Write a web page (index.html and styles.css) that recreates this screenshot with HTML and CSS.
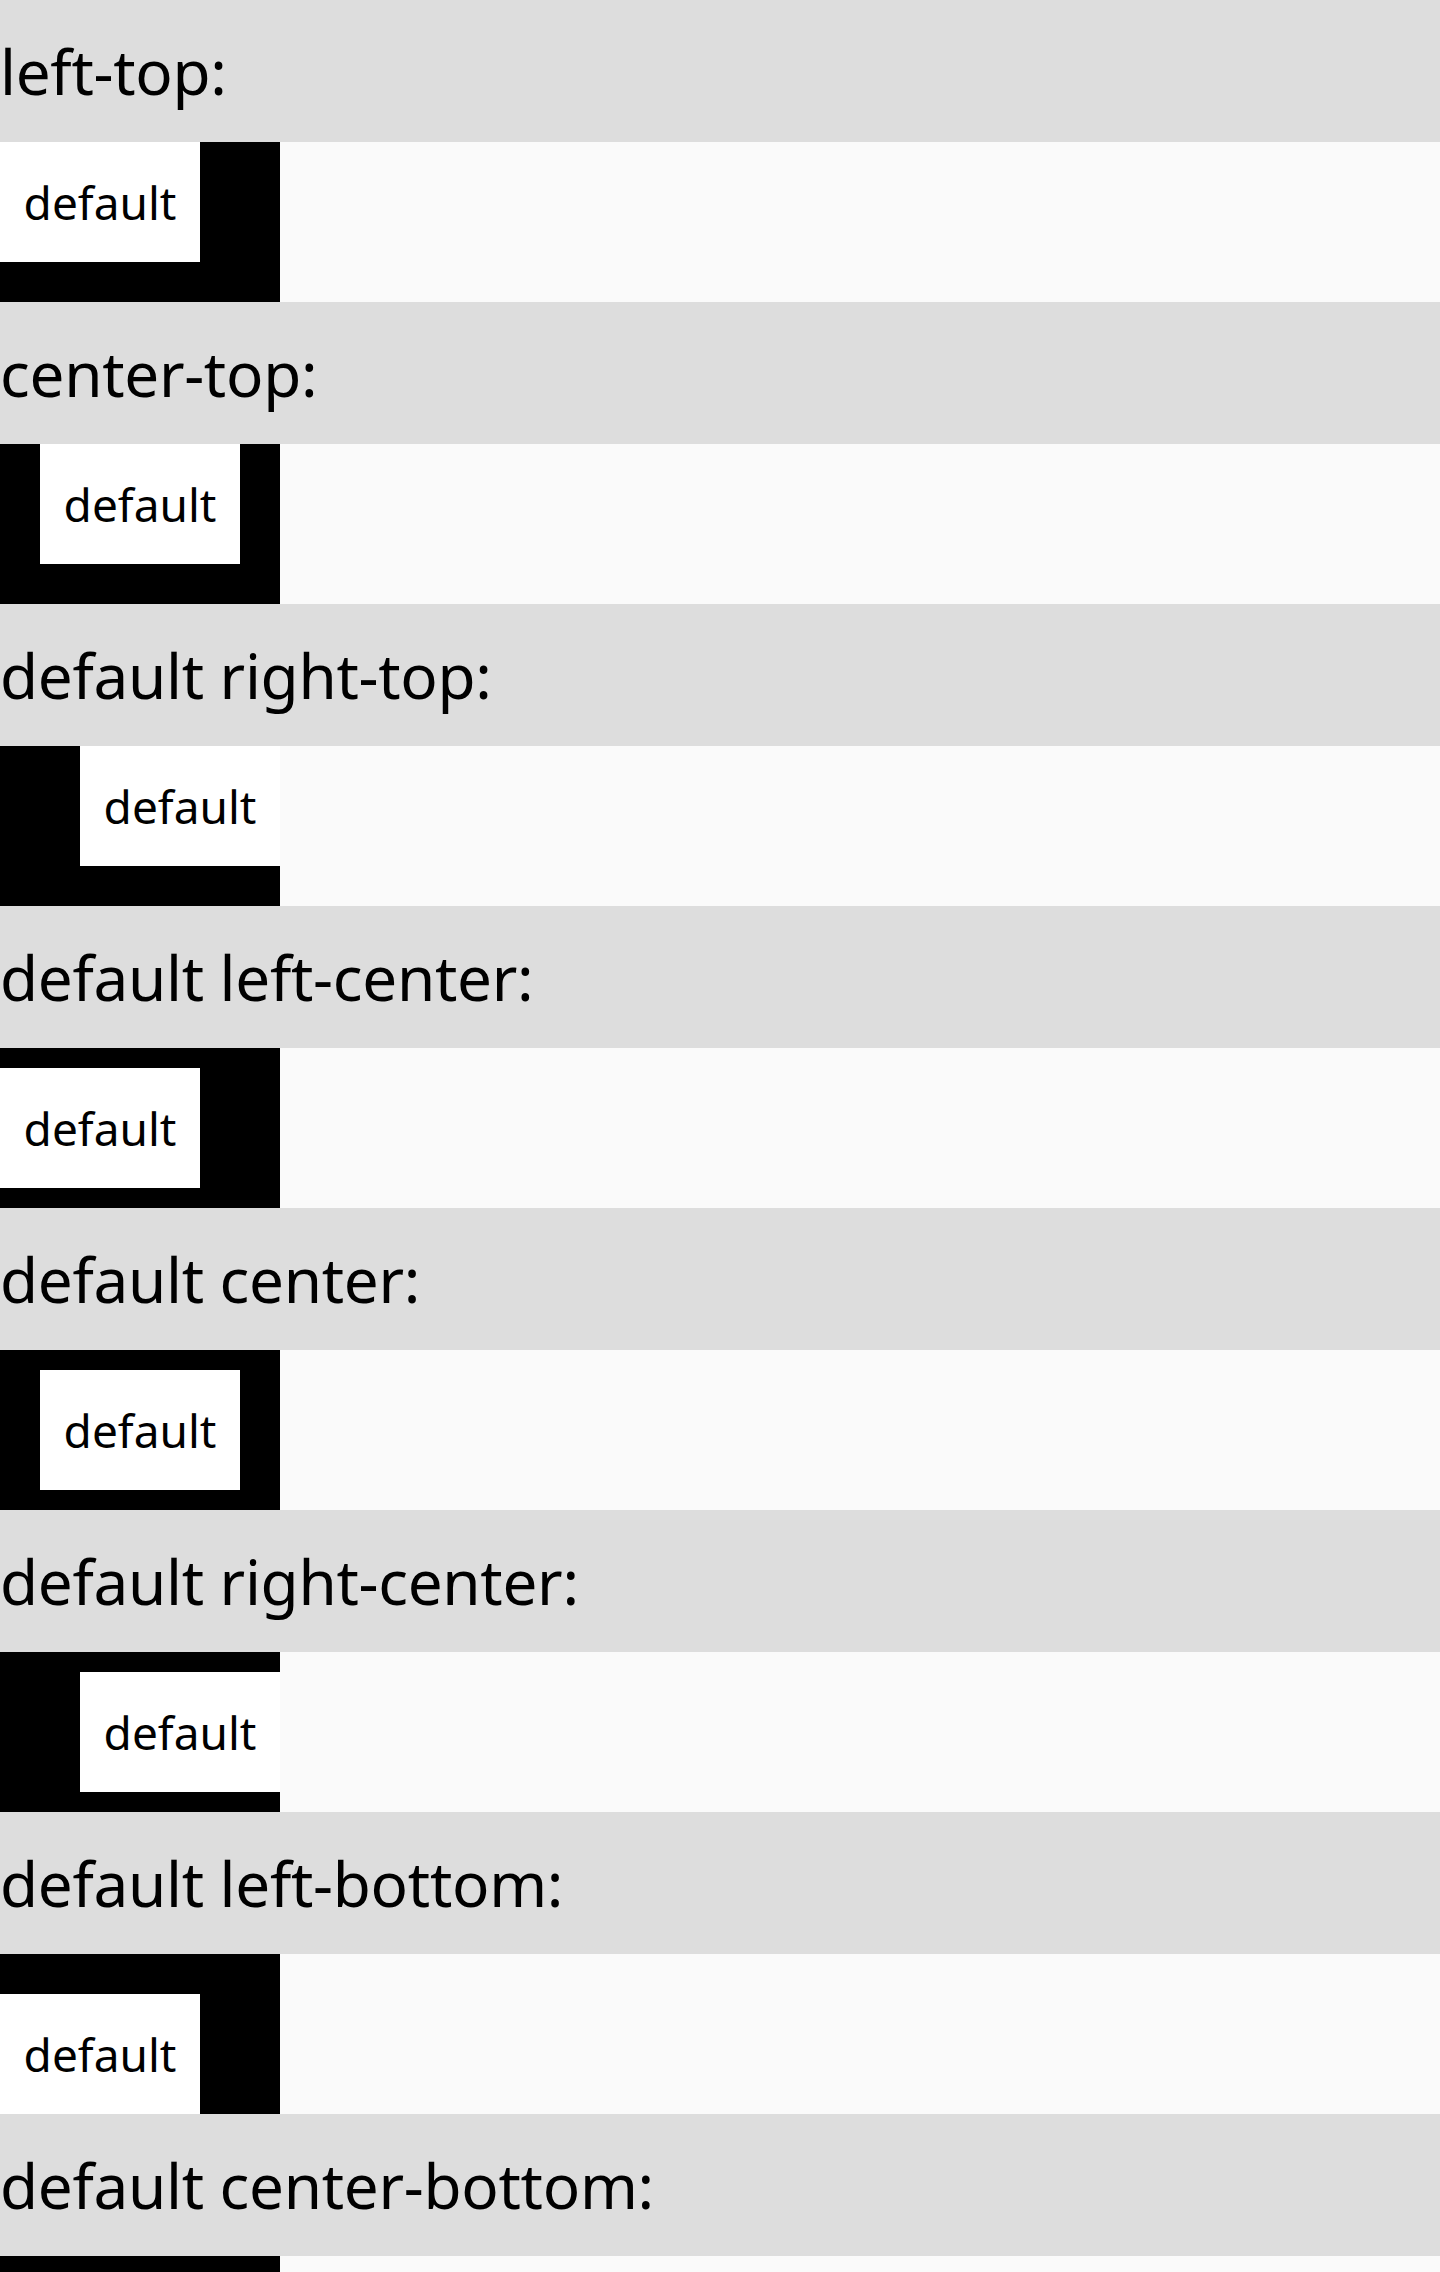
FILE: index.html
```html
<!DOCTYPE html>
<html>
<head>
<meta charset="utf-8">
<link rel="stylesheet" href="styles.css">
</head>
<body>
<div class="title">left-top:</div>
<div class="row"><div class="box lt"><div class="item">default</div></div></div>
<div class="title">center-top:</div>
<div class="row"><div class="box ct"><div class="item">default</div></div></div>
<div class="title">default right-top:</div>
<div class="row"><div class="box rt"><div class="item">default</div></div></div>
<div class="title">default left-center:</div>
<div class="row"><div class="box lc"><div class="item">default</div></div></div>
<div class="title">default center:</div>
<div class="row"><div class="box cc"><div class="item">default</div></div></div>
<div class="title">default right-center:</div>
<div class="row"><div class="box rc"><div class="item">default</div></div></div>
<div class="title">default left-bottom:</div>
<div class="row"><div class="box lb"><div class="item">default</div></div></div>
<div class="title">default center-bottom:</div>
<div class="row"><div class="box cb"><div class="item"></div></div></div>
</body>
</html>
```
FILE: styles.css
```css
html, body {
  margin: 0;
  padding: 0;
  background: #fafafa;
  font-family: "Noto Sans", "Open Sans", sans-serif;
  color: #000;
}
.title {
  background: #dddddd;
  height: 142px;
  line-height: 142px;
  font-size: 62px;
  letter-spacing: -0.3px;
  white-space: nowrap;
}
.row {
  background: #fafafa;
  height: 160px;
}
.box {
  width: 280px;
  height: 160px;
  background: #000;
  display: flex;
}
.item {
  width: 200px;
  height: 120px;
  background: #fff;
  font-size: 46px;
  line-height: 120px;
  text-align: center;
}
.lt { justify-content: flex-start; align-items: flex-start; }
.ct { justify-content: center; align-items: flex-start; }
.rt { justify-content: flex-end; align-items: flex-start; }
.lc { justify-content: flex-start; align-items: center; }
.cc { justify-content: center; align-items: center; }
.rc { justify-content: flex-end; align-items: center; }
.lb { justify-content: flex-start; align-items: flex-end; }
.cb { justify-content: center; align-items: flex-end; }
```
